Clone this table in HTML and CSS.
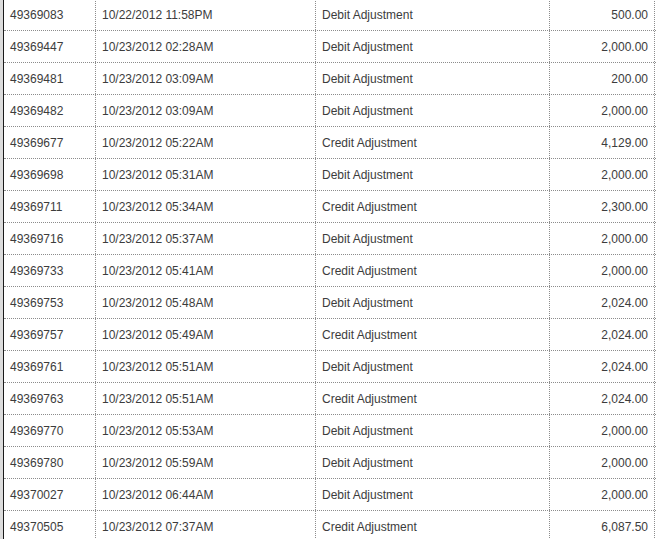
FILE: index.html
```html
<!DOCTYPE html>
<html>
<head>
<meta charset="utf-8">
<link rel="stylesheet" href="styles.css">
</head>
<body>
<div class="page">
  <div class="grid">
    <div class="row"><div class="c id">49369083</div><div class="c dt">10/22/2012 11:58PM</div><div class="c ty">Debit Adjustment</div><div class="c am">500.00</div></div>
    <div class="row"><div class="c id">49369447</div><div class="c dt">10/23/2012 02:28AM</div><div class="c ty">Debit Adjustment</div><div class="c am">2,000.00</div></div>
    <div class="row"><div class="c id">49369481</div><div class="c dt">10/23/2012 03:09AM</div><div class="c ty">Debit Adjustment</div><div class="c am">200.00</div></div>
    <div class="row"><div class="c id">49369482</div><div class="c dt">10/23/2012 03:09AM</div><div class="c ty">Debit Adjustment</div><div class="c am">2,000.00</div></div>
    <div class="row"><div class="c id">49369677</div><div class="c dt">10/23/2012 05:22AM</div><div class="c ty">Credit Adjustment</div><div class="c am">4,129.00</div></div>
    <div class="row"><div class="c id">49369698</div><div class="c dt">10/23/2012 05:31AM</div><div class="c ty">Debit Adjustment</div><div class="c am">2,000.00</div></div>
    <div class="row"><div class="c id">49369711</div><div class="c dt">10/23/2012 05:34AM</div><div class="c ty">Credit Adjustment</div><div class="c am">2,300.00</div></div>
    <div class="row"><div class="c id">49369716</div><div class="c dt">10/23/2012 05:37AM</div><div class="c ty">Debit Adjustment</div><div class="c am">2,000.00</div></div>
    <div class="row"><div class="c id">49369733</div><div class="c dt">10/23/2012 05:41AM</div><div class="c ty">Credit Adjustment</div><div class="c am">2,000.00</div></div>
    <div class="row"><div class="c id">49369753</div><div class="c dt">10/23/2012 05:48AM</div><div class="c ty">Debit Adjustment</div><div class="c am">2,024.00</div></div>
    <div class="row"><div class="c id">49369757</div><div class="c dt">10/23/2012 05:49AM</div><div class="c ty">Credit Adjustment</div><div class="c am">2,024.00</div></div>
    <div class="row"><div class="c id">49369761</div><div class="c dt">10/23/2012 05:51AM</div><div class="c ty">Debit Adjustment</div><div class="c am">2,024.00</div></div>
    <div class="row"><div class="c id">49369763</div><div class="c dt">10/23/2012 05:51AM</div><div class="c ty">Credit Adjustment</div><div class="c am">2,024.00</div></div>
    <div class="row"><div class="c id">49369770</div><div class="c dt">10/23/2012 05:53AM</div><div class="c ty">Debit Adjustment</div><div class="c am">2,000.00</div></div>
    <div class="row"><div class="c id">49369780</div><div class="c dt">10/23/2012 05:59AM</div><div class="c ty">Debit Adjustment</div><div class="c am">2,000.00</div></div>
    <div class="row"><div class="c id">49370027</div><div class="c dt">10/23/2012 06:44AM</div><div class="c ty">Debit Adjustment</div><div class="c am">2,000.00</div></div>
    <div class="row"><div class="c id">49370505</div><div class="c dt">10/23/2012 07:37AM</div><div class="c ty">Credit Adjustment</div><div class="c am">6,087.50</div></div>
  </div>
</div>
</body>
</html>
```

FILE: styles.css
```css
html, body {
  margin: 0;
  padding: 0;
  background: #ffffff;
  overflow: hidden;
}
.page {
  width: 659px;
  height: 539px;
  border-left: 3px solid #dcdcdc;
  box-sizing: border-box;
  overflow: hidden;
}
.grid {
  width: 652px;
  margin-top: -1px;
  border-left: 1px solid #1a1a1a;
  font-family: "Liberation Sans", Arial, sans-serif;
  font-size: 12px;
  color: #3c3c3c;
}
.row {
  display: flex;
  height: 32px;
  border-bottom: 1px dotted #8c8c8c;
  box-sizing: border-box;
}
.c {
  height: 31px;
  line-height: 32px;
  padding: 0 6px;
  box-sizing: border-box;
  border-right: 1px dotted #8c8c8c;
  white-space: nowrap;
  overflow: hidden;
}
.id { width: 92px; }
.dt { width: 220px; }
.ty { width: 234px; }
.am { width: 105px; text-align: right; }
```
